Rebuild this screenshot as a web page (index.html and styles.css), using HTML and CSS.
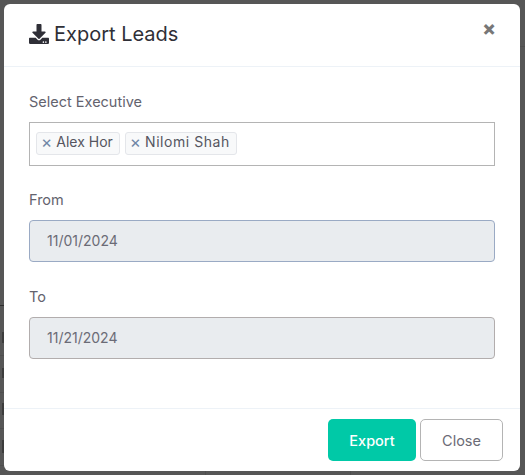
FILE: index.html
```html
<!DOCTYPE html>
<html lang="en">
<head>
    <meta charset="UTF-8">
    <title>Export Leads</title>
    <link rel="stylesheet" href="styles.css">
</head>
<body>
    <div class="modal">
        <div class="modal-header">
            <h1 class="modal-title">
                <svg class="title-icon" viewBox="0 0 512 512" aria-hidden="true">
                    <path d="M216 0h80c13.300 0 24 10.700 24 24v168h87.700c17.800 0 26.700 21.500 14.100 34.100L269.700 378.300c-7.500 7.500-19.800 7.500-27.300 0L90.100 226.100c-12.600-12.600-3.700-34.100 14.100-34.100H192V24c0-13.300 10.700-24 24-24zm296 376v112c0 13.300-10.700 24-24 24H24c-13.300 0-24-10.700-24-24V376c0-13.300 10.700-24 24-24h146.700l49 49c20.100 20.100 52.500 20.100 72.600 0l49-49H488c13.300 0 24 10.700 24 24zm-124 88c0-11-9-20-20-20s-20 9-20 20 9 20 20 20 20-9 20-20zm64 0c0-11-9-20-20-20s-20 9-20 20 9 20 20 20 20-9 20-20z"/>
                </svg>
                Export Leads
            </h1>
            <span class="close-x">&times;</span>
        </div>

        <div class="modal-body">
            <div class="form-group">
                <label class="form-label">Select Executive</label>
                <div class="tag-input">
                    <span class="tag"><span class="tag-x">&times;</span>Alex Hor</span>
                    <span class="tag tag-long"><span class="tag-x">&times;</span>Nilomi Shah</span>
                </div>
            </div>
            <div class="form-group">
                <label class="form-label">From</label>
                <div class="date-field date-from">11/01/2024</div>
            </div>
            <div class="form-group">
                <label class="form-label">To</label>
                <div class="date-field">11/21/2024</div>
            </div>
        </div>

        <div class="modal-footer">
            <button class="btn btn-export">Export</button>
            <button class="btn btn-close">Close</button>
        </div>
    </div>
</body>
</html>
```

FILE: styles.css
```css
* {
    margin: 0;
    padding: 0;
    box-sizing: border-box;
    font-family: 'Inter', 'Noto Sans', sans-serif;
}

html, body {
    height: 475px;
    overflow: hidden;
}

/* Overlay, with the table behind it showing through at the edges */
body {
    background-color: #565656;
    background-image:
        linear-gradient(#2e2e2e, #2e2e2e),
        linear-gradient(#3c3c3c, #3c3c3c),
        linear-gradient(#3c3c3c, #3c3c3c),
        linear-gradient(#3c3c3c, #3c3c3c),
        linear-gradient(#3c3c3c, #3c3c3c),
        linear-gradient(#4e4e4e, #4e4e4e),
        linear-gradient(#4e4e4e, #4e4e4e),
        linear-gradient(#4e4e4e, #4e4e4e),
        linear-gradient(#4e4e4e, #4e4e4e),
        linear-gradient(#4e4e4e, #4e4e4e),
        linear-gradient(#4e4e4e, #4e4e4e),
        linear-gradient(#4e4e4e, #4e4e4e);
    background-repeat: no-repeat;
    background-size:
        4px 1px,
        2px 11px, 2px 10px, 2px 12px, 2px 13px,
        4px 1px, 4px 1px, 4px 1px, 4px 1px,
        5px 1px,
        1px 4px, 1px 4px;
    background-position:
        0 305px,
        2px 332px, 2px 368px, 2px 403px, 2px 440px,
        0 355px, 0 392px, 0 428px, 0 465px,
        520px 46px,
        205px 471px, 350px 471px;
    padding: 4px 5px 4px 4px;
    color: #6b6b76;
}

.modal {
    height: 467px;
    background: white;
    border-radius: 6px;
    display: flex;
    flex-direction: column;
}

/* Header */
.modal-header {
    height: 63px;
    padding: 0 25px;
    border-bottom: 1px solid #edf2f7;
    display: flex;
    justify-content: space-between;
    position: relative;
}

.modal-title {
    display: flex;
    align-items: center;
    gap: 5px;
    font-size: 20px;
    font-weight: 400;
    color: #2f2f37;
    padding-bottom: 3px;
}

.title-icon {
    width: 20px;
    height: 20px;
    fill: #2f2f37;
}

.close-x {
    position: absolute;
    top: 12px;
    right: 24px;
    font-size: 20px;
    font-weight: 800;
    line-height: 24px;
    color: #777;
}

/* Form */
.modal-body {
    flex: 1;
    padding: 25px 25px 0;
}

.form-group {
    margin-bottom: 24.3px;
}

.form-label {
    display: block;
    font-size: 14.5px;
    line-height: 20px;
    margin-bottom: 10px;
    color: #63636e;
}

.tag-input {
    height: 44px;
    border: 1px solid #b4b4b4;
    padding: 9px 6px;
    display: flex;
    gap: 5px;
    align-items: flex-start;
}

.tag {
    height: 23px;
    padding: 0 6px 0 4px;
    background: #f8f9fa;
    border: 1px solid #e4e6ea;
    border-radius: 3px;
    font-size: 14px;
    line-height: 18px;
    color: #55555f;
    display: flex;
    gap: 4px;
}

.tag-long {
    letter-spacing: 0.55px;
}

.tag-x {
    color: #6f86a6;
    font-size: 17px;
    letter-spacing: 0;
}

.date-field {
    height: 42px;
    padding: 0 17px;
    background: #e9ecef;
    border: 1px solid #b2adad;
    border-radius: 4px;
    font-size: 14px;
    line-height: 40px;
    color: #6b6b76;
}

.date-from {
    border-color: #9aaac4;
}

/* Footer */
.modal-footer {
    height: 63px;
    border-top: 1px solid #edf2f7;
    padding: 10px 17px 0 0;
    display: flex;
    justify-content: flex-end;
    gap: 4px;
}

.btn {
    height: 42px;
    border-radius: 5px;
    font-size: 14.5px;
    cursor: pointer;
}

.btn-export {
    width: 88px;
    border: none;
    background: #00c9a7;
    color: white;
    font-weight: 500;
}

.btn-close {
    width: 83px;
    background: white;
    border: 1px solid #b4b4b4;
    color: #6b6b76;
}
```
